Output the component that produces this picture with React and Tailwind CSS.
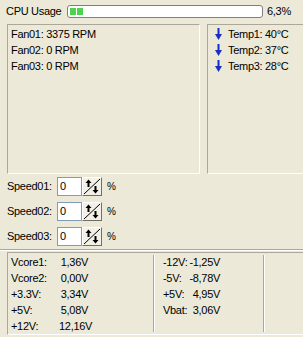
import React from 'react'

const fans = ['Fan01: 3375 RPM', 'Fan02: 0 RPM', 'Fan03: 0 RPM']
const temps = ['Temp1: 40°C', 'Temp2: 37°C', 'Temp3: 28°C']
const volts1 = [['Vcore1:', '1,36V'], ['Vcore2:', '0,00V'], ['+3.3V:', '3,34V'], ['+5V:', '5,08V'], ['+12V:', '12,16V']]
const volts2 = [['-12V:', '-1,25V'], ['-5V:', '-8,78V'], ['+5V:', '4,95V'], ['Vbat:', '3,06V']]

const sunken = 'border border-t-[#aca899] border-l-[#aca899] border-b-white border-r-white'

const DownArrow = () => (
  <svg width="7" height="12" viewBox="0 0 7 12" className="shrink-0">
    <rect x="2.5" y="0" width="2" height="8" fill="#1b2ec8" />
    <path d="M0 6 L7 6 L3.5 12 Z" fill="#1b2ec8" />
  </svg>
)

const SpinButton = () => (
  <div className="w-[20px] h-[19px] bg-[#f3f1e7] border border-t-white border-l-white border-b-[#716f64] border-r-[#716f64]">
    <svg width="18" height="17" viewBox="0 0 18 17">
      <line x1="1" y1="16" x2="17" y2="1" stroke="#000" strokeWidth="1" />
      <rect x="4.5" y="3" width="2" height="6" fill="#000" />
      <path d="M2.5 5 L8.5 5 L5.5 1.5 Z" fill="#000" />
      <rect x="11.5" y="8" width="2" height="6" fill="#000" />
      <path d="M9.5 12 L15.5 12 L12.5 15.5 Z" fill="#000" />
    </svg>
  </div>
)

const SpeedRow = ({ label }) => (
  <div className="flex items-center h-[25px]">
    <span className="w-[50px] whitespace-nowrap">{label}</span>
    <div className="w-[25px] h-[19px] bg-white border border-[#7f9db9] pl-[2px] leading-[17px]">0</div>
    <SpinButton />
    <span className="ml-[5px] text-[10px]">%</span>
  </div>
)

const Divider = () => (
  <div className="w-[2px] h-full border-l border-l-[#aca899] border-r border-r-white" />
)

export default function App() {
  return (
    <div
      className="w-[303px] h-[337px] bg-[#ece9d8] text-black text-[11px] tracking-[-0.3px] overflow-hidden"
      style={{ fontFamily: '"Liberation Sans", Arial, sans-serif' }}
    >
      <div className="flex items-center h-[22px] pl-[6px] whitespace-nowrap">
        <span className="w-[61px]">CPU Usage</span>
        <div className="w-[196px] h-[13px] bg-white border border-[#7f7f7f] rounded-[3px] flex items-center px-[2px] gap-[1px]">
          <div className="w-[6px] h-[7px] bg-[#4fd24f]" />
          <div className="w-[6px] h-[7px] bg-[#4fd24f]" />
        </div>
        <span className="ml-[4px]">6,3%</span>
      </div>

      <div className="flex pl-[7px] mt-[2px] h-[150px]">
        <div className={`w-[193px] h-full ${sunken} pl-[3px] pt-[1px]`}>
          {fans.map(f => (
            <div key={f} className="h-[16px] leading-[16px] whitespace-nowrap">{f}</div>
          ))}
        </div>
        <div className={`ml-[7px] flex-1 h-full ${sunken} border-r-0 pl-[7px] pt-[1px]`}>
          {temps.map(t => (
            <div key={t} className="h-[16px] flex items-center gap-[6px] whitespace-nowrap">
              <DownArrow />
              <span>{t}</span>
            </div>
          ))}
        </div>
      </div>

      <div className="pl-[7px] h-[75px]">
        <SpeedRow label="Speed01:" />
        <SpeedRow label="Speed02:" />
        <SpeedRow label="Speed03:" />
      </div>

      <div className="h-[2px] border-t border-t-[#aca899] border-b border-b-white" />

      <div className="pl-[7px] pt-[1px]">
        <div className={`h-[83px] flex ${sunken} border-r-0`}>
          <div className="w-[145px] pl-[3px] pt-[1px]">
            {volts1.map(([k, v]) => (
              <div key={k} className="flex h-[16px] leading-[16px] whitespace-nowrap">
                <span className="w-[48px]">{k}</span>
                <span className="w-[29px] text-right">{v}</span>
              </div>
            ))}
          </div>
          <div className="py-[2px]"><Divider /></div>
          <div className="w-[108px] pl-[8px] pt-[1px]">
            {volts2.map(([k, v]) => (
              <div key={k} className="flex h-[16px] leading-[16px] whitespace-nowrap">
                <span className="w-[24px]">{k}</span>
                <span className="w-[33px] text-right">{v}</span>
              </div>
            ))}
          </div>
          <div className="py-[2px]"><Divider /></div>
        </div>
      </div>
    </div>
  )
}
